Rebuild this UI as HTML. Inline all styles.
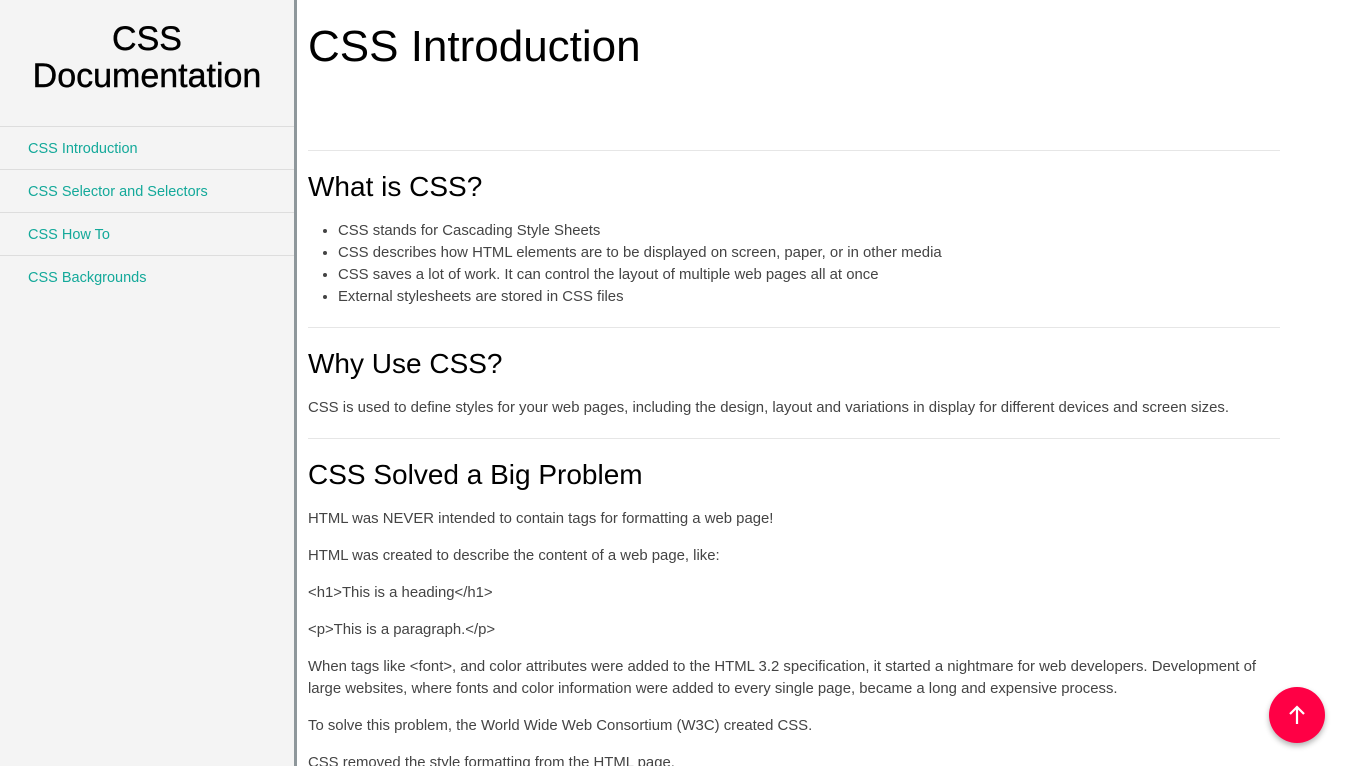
<!DOCTYPE html>
<html><head><meta charset="utf-8"><style>
*{margin:0;padding:0;box-sizing:border-box}
html,body{width:1347px;height:766px;overflow:hidden}
body{font-family:"Liberation Sans",sans-serif;background:#fff;position:relative}
.side{position:absolute;left:0;top:0;width:297px;height:766px;background:#f4f4f4;border-right:3px solid #8e979b}
.side h1{font-size:34px;font-weight:normal;text-align:center;line-height:37px;padding-top:21px;height:126px;color:#000;-webkit-text-stroke:0.4px #000}
.side a{display:block;height:43px;line-height:44px;border-top:1px solid #ddd;padding-left:28px;color:#14a99a;font-size:14.5px;text-decoration:none}
.main{position:absolute;left:308px;top:0;width:972px;color:#444;font-size:14.9px}
.main h1{font-size:44px;font-weight:normal;color:#000;margin-top:21px;line-height:52px;height:129px}
hr{border:0;border-top:1px solid #e6e6e6}
h2{font-size:28px;font-weight:normal;color:#000;line-height:36px}
ul{padding-left:30px;line-height:22px}
p{line-height:22px;margin-bottom:15px}
.fab{position:absolute;left:1269px;top:687px;width:56px;height:56px;border-radius:50%;background:#ff0045;box-shadow:0 3px 6px rgba(0,0,0,.3)}
</style></head><body>
<div class="side"><h1>CSS<br>Documentation</h1>
<a>CSS Introduction</a><a>CSS Selector and Selectors</a><a>CSS How To</a><a>CSS Backgrounds</a></div>
<div class="main">
<h1>CSS Introduction</h1>
<hr>
<h2 style="margin-top:18px">What is CSS?</h2>
<ul style="margin-top:15px;margin-bottom:19px"><li>CSS stands for Cascading Style Sheets</li><li>CSS describes how HTML elements are to be displayed on screen, paper, or in other media</li><li>CSS saves a lot of work. It can control the layout of multiple web pages all at once</li><li>External stylesheets are stored in CSS files</li></ul>
<hr>
<h2 style="margin-top:18px">Why Use CSS?</h2>
<p style="margin-top:15px;margin-bottom:19px">CSS is used to define styles for your web pages, including the design, layout and variations in display for different devices and screen sizes.</p>
<hr>
<h2 style="margin-top:18px">CSS Solved a Big Problem</h2>
<p style="margin-top:15px">HTML was NEVER intended to contain tags for formatting a web page!</p>
<p>HTML was created to describe the content of a web page, like:</p>
<p>&lt;h1&gt;This is a heading&lt;/h1&gt;</p>
<p>&lt;p&gt;This is a paragraph.&lt;/p&gt;</p>
<p>When tags like &lt;font&gt;, and color attributes were added to the HTML 3.2 specification, it started a nightmare for web developers. Development of large websites, where fonts and color information were added to every single page, became a long and expensive process.</p>
<p>To solve this problem, the World Wide Web Consortium (W3C) created CSS.</p>
<p>CSS removed the style formatting from the HTML page.</p>
</div>
<div class="fab"><svg width="56" height="56" viewBox="0 0 56 56"><path d="M28 37V20M21 27l7-7 7 7" stroke="#fff" stroke-width="2.2" fill="none"/></svg></div>
</body></html>
